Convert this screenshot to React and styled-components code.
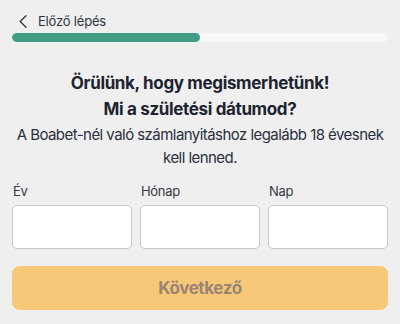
import React from 'react';
import styled, { createGlobalStyle } from 'styled-components';

const GlobalStyle = createGlobalStyle`
  html, body {
    margin: 0;
    padding: 0;
    background: #efefef;
  }
  body {
    font-family: Inter, "Liberation Sans", sans-serif;
    -webkit-font-smoothing: antialiased;
  }
`;

const Page = styled.div`
  width: 400px;
  height: 324px;
  box-sizing: border-box;
  padding: 11px 12px 0;
  background: #efefef;
  overflow: hidden;
`;

const BackRow = styled.div`
  display: flex;
  align-items: center;
  gap: 11px;
  height: 20px;
  padding-left: 7px;
  font-size: 13px;
  color: #2f3540;
  letter-spacing: -0.2px;
`;

const Track = styled.div`
  margin-top: 2px;
  height: 9px;
  border-radius: 5px;
  background: #f7f7f7;
  overflow: hidden;
`;

const Fill = styled.div`
  height: 100%;
  border-radius: 5px;
  background: #419e84;
`;

const Title = styled.h1`
  margin: 28px 0 0;
  text-align: center;
  font-size: 17px;
  line-height: 26px;
  font-weight: 700;
  letter-spacing: -0.35px;
  color: #1d2330;
`;

const Lead = styled.p`
  margin: 1px 0 0;
  text-align: center;
  font-size: 15px;
  line-height: 23px;
  letter-spacing: -0.55px;
  color: #2a303c;
`;

const Fields = styled.div`
  display: grid;
  grid-template-columns: repeat(3, 1fr);
  gap: 8px;
  margin-top: 14px;
`;

const Field = styled.label`
  display: flex;
  flex-direction: column;
  gap: 6px;
`;

const Label = styled.span`
  font-size: 13px;
  line-height: 16px;
  letter-spacing: -0.3px;
  color: #333a44;
  padding-left: 1px;
`;

const Input = styled.input`
  box-sizing: border-box;
  height: 44px;
  width: 100%;
  border: 1px solid #c6c6c6;
  border-radius: 5px;
  background: #fff;
  font: inherit;
  outline: none;
`;

const NextButton = styled.button`
  display: block;
  width: 100%;
  height: 44px;
  margin-top: 17px;
  border: 0;
  border-radius: 8px;
  background: #f7c878;
  color: #9a8574;
  font-family: inherit;
  font-size: 17px;
  font-weight: 700;
  letter-spacing: -0.4px;
`;

const Chevron = () => (
  <svg width="8" height="13" viewBox="0 0 8 13" fill="none">
    <path d="M7 0.8 L1.2 6.5 L7 12.2" stroke="#2f3540" strokeWidth="1.3" strokeLinecap="round" strokeLinejoin="round" />
  </svg>
);

const App = () => (
  <Page>
    <GlobalStyle />
    <BackRow><Chevron />Előző lépés</BackRow>
    <Track><Fill style={{ width: '50%' }} /></Track>
    <Title>Örülünk, hogy megismerhetünk!<br />Mi a születési dátumod?</Title>
    <Lead>A Boabet-nél való számlanyitáshoz legalább 18 évesnek kell lenned.</Lead>
    <Fields>
      <Field><Label>Év</Label><Input /></Field>
      <Field><Label>Hónap</Label><Input /></Field>
      <Field><Label>Nap</Label><Input /></Field>
    </Fields>
    <NextButton>Következő</NextButton>
  </Page>
);

export default App;
